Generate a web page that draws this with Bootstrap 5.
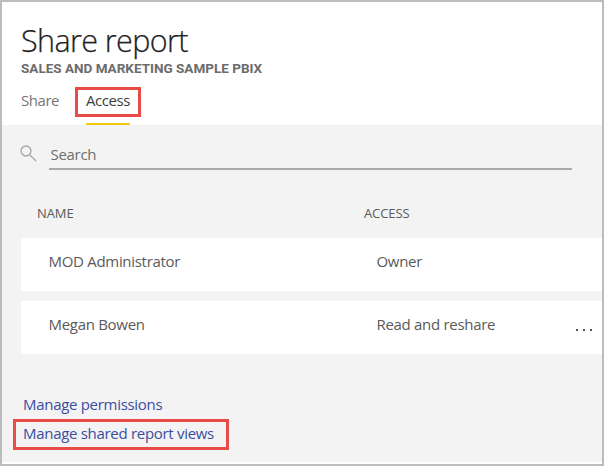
<!DOCTYPE html>
<html lang="en">
<head>
<meta charset="utf-8">
<meta name="viewport" content="width=device-width, initial-scale=1">
<title>Share report</title>
<link href="https://cdn.jsdelivr.net/npm/bootstrap@5.3.0/dist/css/bootstrap.min.css" rel="stylesheet">
<style>
body{font-family:"Open Sans","Noto Sans",sans-serif;font-size:15px;letter-spacing:-.3px;line-height:24px;color:#5a5a5a;overflow:hidden}
.panel{height:466px;border:2px solid #bcbcbc;padding-bottom:2px}
.panel-head{height:123px;padding:19px 19px 0}
.panel-title{font-size:30.5px;line-height:38px;font-weight:300;letter-spacing:-.6px;color:#222;-webkit-text-stroke:.25px #222}
.panel-sub{font-family:Roboto,sans-serif;font-size:13.5px;line-height:18px;font-weight:700;letter-spacing:0;color:#6b6b6b}
.tabs-line{height:48px}
.tabs-line .nav-link{padding:11px 0 0;color:#767676;width:37px;letter-spacing:-.45px;white-space:nowrap}
.tabs-line .nav-link.active{color:#3c3c3c;width:44px;margin-left:28px;border-bottom:2px solid #f2c811}
.callout{position:absolute;border:3px solid #e94b47;pointer-events:none}
.callout-tab{left:-11px;top:10px;width:66px;height:30px}
.callout-link{left:-10px;top:0;width:216px;height:31px}
.panel-main{background:#f3f3f3;padding-left:19px}
.search-line{padding-top:17px}
.search-line svg{margin:3px 0 0 -1px}
.search-field{width:523px;height:28px;margin-left:12px;border-bottom:2px solid #a9a9a9;color:#6e6e6e;padding:0 0 0 1.5px}
.cols{height:68px;padding:31px 0 0 16px;font-size:13px;letter-spacing:-.1px}
.cols .cell-name{width:327px}
.entry{height:53px;background:#fff;padding:11px 10px 0 27.5px}
.entry + .entry{margin-top:10px}
.entry .cell-name{width:328px}
.more{gap:5px;padding-top:17px}
.more i{width:2px;height:2px;background:#555}
.links{padding:36px 0 0 2px}
.links a{color:#3a4ea0;width:max-content;line-height:29px}
</style>
<script src="https://cdn.jsdelivr.net/npm/bootstrap@5.3.0/dist/js/bootstrap.bundle.min.js"></script>
</head>
<body>
<div class="panel d-flex flex-column bg-white">
  <header class="panel-head">
    <h1 class="panel-title mb-0">Share report</h1>
    <div class="panel-sub">SALES AND MARKETING SAMPLE PBIX</div>
    <nav class="nav tabs-line flex-nowrap">
      <a class="nav-link" href="#">Share</a>
      <a class="nav-link active position-relative" href="#">Access<span class="callout callout-tab"></span></a>
    </nav>
  </header>
  <main class="panel-main flex-grow-1">
    <div class="search-line d-flex">
      <svg width="17" height="17" viewBox="0 0 17 17" fill="none" stroke="#a6a6a6" stroke-width="1.3"><circle cx="6" cy="6" r="5"/><path d="M9.6 9.6 16 16"/></svg>
      <div class="search-field">Search</div>
    </div>
    <div class="cols d-flex"><div class="cell-name">NAME</div><div>ACCESS</div></div>
    <div class="entry d-flex"><div class="cell-name">MOD Administrator</div><div>Owner</div></div>
    <div class="entry d-flex"><div class="cell-name">Megan Bowen</div><div>Read and reshare</div><div class="more d-flex ms-auto"><i></i><i></i><i></i></div></div>
    <div class="links">
      <a class="d-block text-decoration-none" href="#">Manage permissions</a>
      <a class="d-block text-decoration-none position-relative" href="#">Manage shared report views<span class="callout callout-link"></span></a>
    </div>
  </main>
</div>
</body>
</html>
